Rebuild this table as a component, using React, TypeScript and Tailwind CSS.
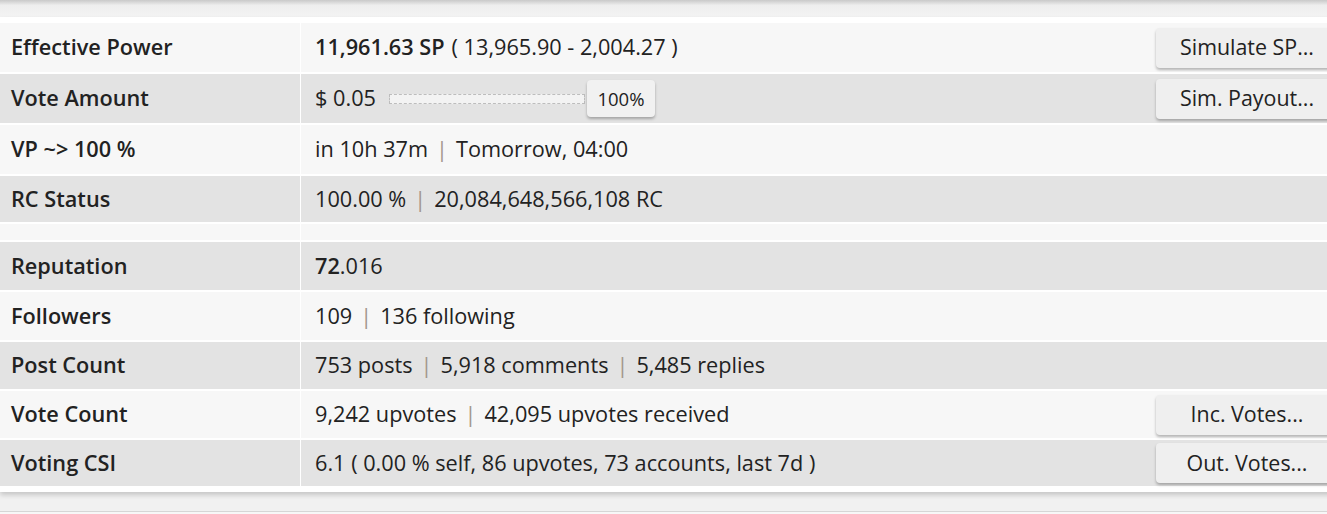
import type { ReactNode } from "react"

function Sep() {
  return <span className="mx-[8px] text-[#a3968c]">|</span>
}

function SideButton({ children }: { children: ReactNode }) {
  return (
    <button className="ml-auto h-[40px] w-[182px] shrink-0 rounded-[4px] bg-[#efefef] text-[21.4px] text-[#222] shadow-[0_2px_3px_rgba(0,0,0,0.28)]">
      {children}
    </button>
  )
}

function Row({
  label,
  dark,
  children,
  action,
  h = "h-[48px]",
}: {
  label: string
  dark?: boolean
  children?: ReactNode
  action?: ReactNode
  h?: string
}) {
  const bg = dark ? "bg-[#e3e3e3]" : "bg-[#f7f7f7]"
  return (
    <div className={`flex gap-px ${h}`}>
      <div className={`flex w-[300px] shrink-0 items-center pl-[11px] font-semibold ${bg}`}>{label}</div>
      <div className={`flex flex-1 items-center pl-[14px] pr-[2px] ${bg}`}>
        <div className="flex items-center">{children}</div>
        {action}
      </div>
    </div>
  )
}

export default function App() {
  return (
    <div className="h-[514px] w-full overflow-hidden bg-[#f1f1f1] font-['Open_Sans',sans-serif] text-[21.7px] text-[#222]">
      <div className="h-[5px] bg-gradient-to-b from-[#c9c9c9] to-[#ececec]" />
      <div className="h-[12px] bg-gradient-to-b from-[#eeeeee] to-[#f4f4f4]" />
      <div className="w-[1340px] bg-white pt-[6px] pb-[6px] shadow-[0_3px_5px_rgba(0,0,0,0.18)]">
        <div className="flex flex-col gap-[2px]">
          <Row label="Effective Power" action={<SideButton>Simulate SP...</SideButton>} h="h-[49px]">
            <span className="font-semibold">11,961.63 SP</span>
            <span className="ml-[7px]">( 13,965.90 - 2,004.27 )</span>
          </Row>
          <Row label="Vote Amount" dark action={<SideButton>Sim. Payout...</SideButton>} h="h-[49px]">
            <span>$ 0.05</span>
            <div className="ml-[13px] h-[10px] w-[196px] border border-dashed border-[#bdbdbd] bg-[#f3f3f3]" />
            <div className="ml-[2px] flex h-[37px] w-[68px] items-center justify-center rounded-[4px] bg-[#f1f1f1] text-[18.5px] shadow-[0_2px_3px_rgba(0,0,0,0.28)]">
              100%
            </div>
          </Row>
          <Row label="VP ~> 100 %" h="h-[49px]">
            <span>in 10h 37m</span>
            <Sep />
            <span>Tomorrow, 04:00</span>
          </Row>
          <Row label="RC Status" dark h="h-[46px]">
            <span>100.00 %</span>
            <Sep />
            <span>20,084,648,566,108 RC</span>
          </Row>
          <Row label="" h="h-[16px]" />
          <Row label="Reputation" dark>
            <span className="font-semibold">72</span>
            <span>.016</span>
          </Row>
          <Row label="Followers">
            <span>109</span>
            <Sep />
            <span>136 following</span>
          </Row>
          <Row label="Post Count" dark h="h-[47px]">
            <span>753 posts</span>
            <Sep />
            <span>5,918 comments</span>
            <Sep />
            <span>5,485 replies</span>
          </Row>
          <Row label="Vote Count" action={<SideButton>Inc. Votes...</SideButton>} h="h-[47px]">
            <span>9,242 upvotes</span>
            <Sep />
            <span>42,095 upvotes received</span>
          </Row>
          <Row label="Voting CSI" dark action={<SideButton>Out. Votes...</SideButton>} h="h-[46px]">
            <span>6.1 ( 0.00 % self, 86 upvotes, 73 accounts, last 7d )</span>
          </Row>
        </div>
      </div>
      <div className="mt-[19px] h-[4px] border-t border-[#d6d6d6] bg-[#f7f7f7]" />
    </div>
  )
}
